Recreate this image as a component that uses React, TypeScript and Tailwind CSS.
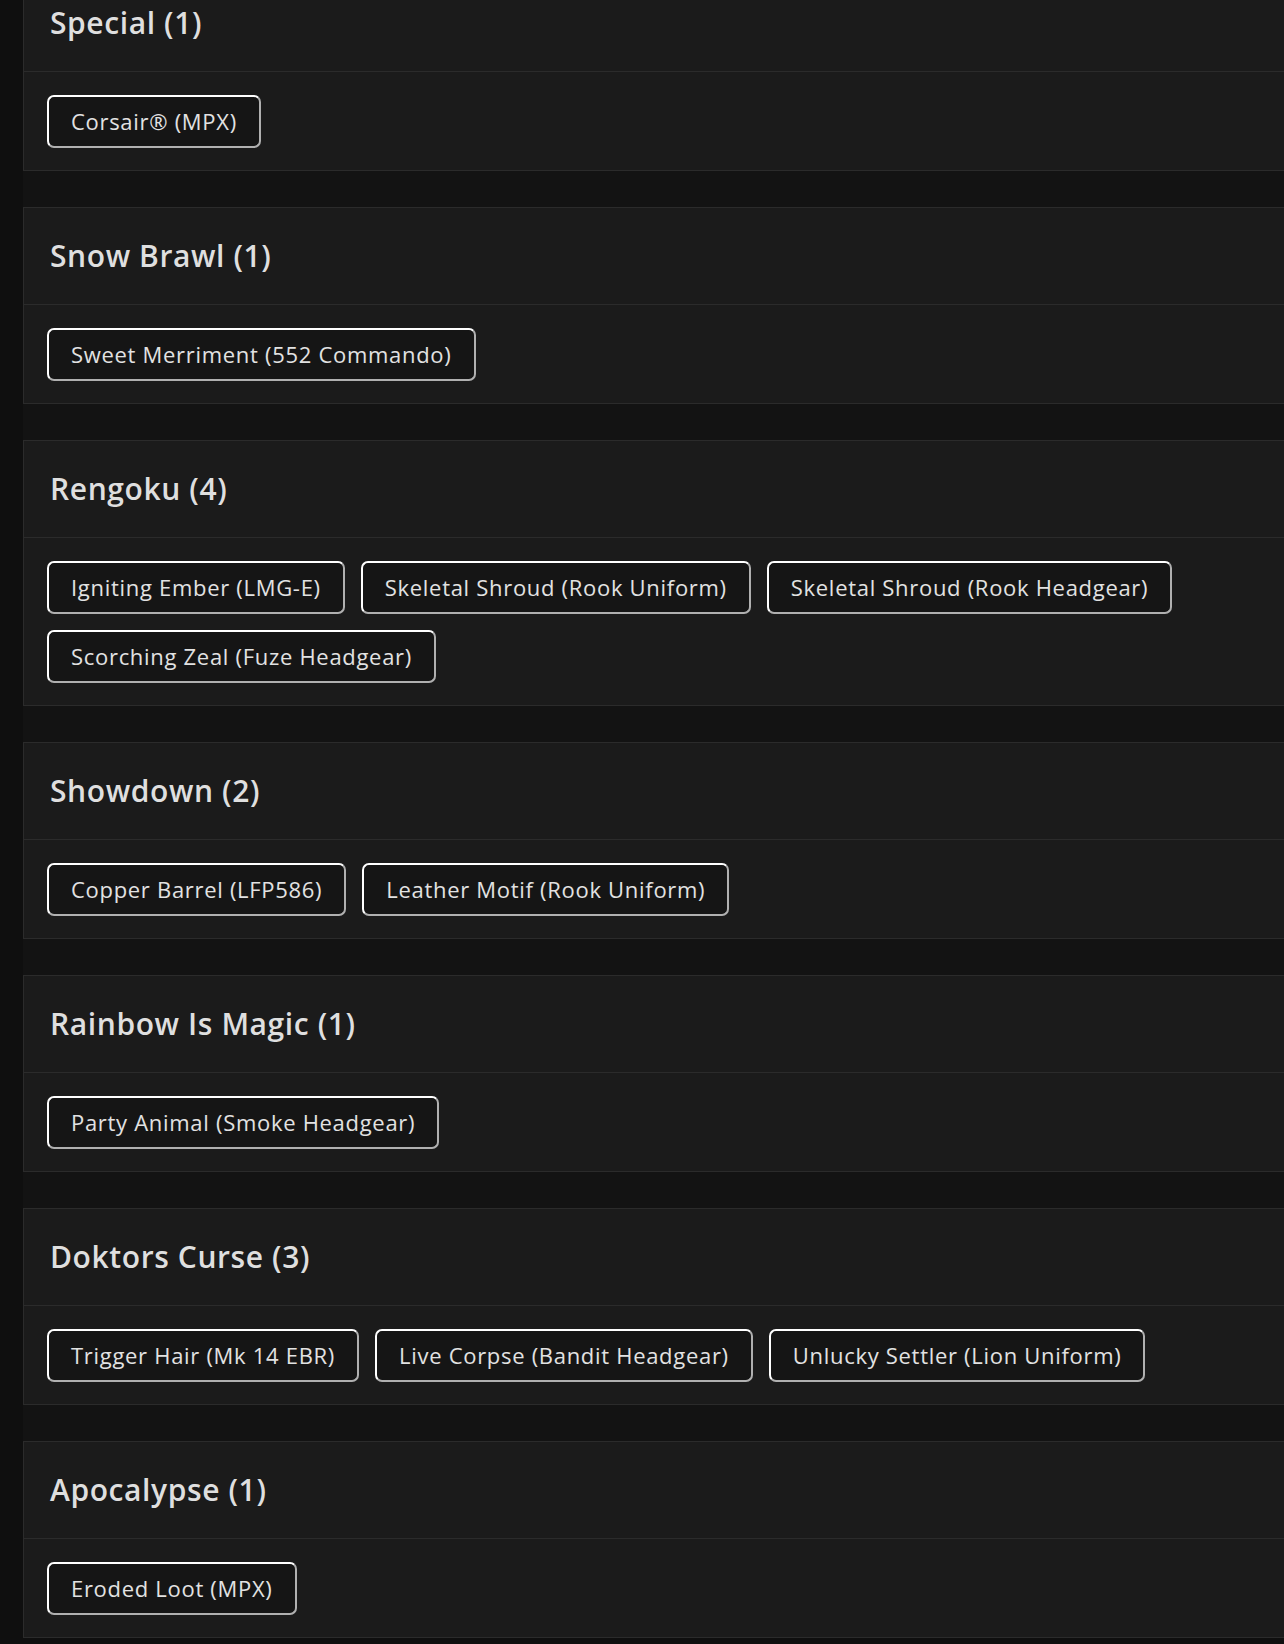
const EVENTS: { title: string; items: string[] }[] = [
  { title: "Special", items: ["Corsair® (MPX)"] },
  { title: "Snow Brawl", items: ["Sweet Merriment (552 Commando)"] },
  {
    title: "Rengoku",
    items: [
      "Igniting Ember (LMG-E)",
      "Skeletal Shroud (Rook Uniform)",
      "Skeletal Shroud (Rook Headgear)",
      "Scorching Zeal (Fuze Headgear)",
    ],
  },
  { title: "Showdown", items: ["Copper Barrel (LFP586)", "Leather Motif (Rook Uniform)"] },
  { title: "Rainbow Is Magic", items: ["Party Animal (Smoke Headgear)"] },
  {
    title: "Doktors Curse",
    items: [
      "Trigger Hair (Mk 14 EBR)",
      "Live Corpse (Bandit Headgear)",
      "Unlucky Settler (Lion Uniform)",
    ],
  },
  { title: "Apocalypse", items: ["Eroded Loot (MPX)"] },
];

export default function App() {
  return (
    <div
      className="w-[1284px] h-[1644px] overflow-hidden bg-[#0f0f0f] text-[#e4e4e4]"
      style={{ fontFamily: '"Open Sans", "Noto Sans", sans-serif' }}
    >
      <div className="ml-[23px] w-[1300px] bg-[#131313] -mt-[26px] flex flex-col gap-[36px]">
        {EVENTS.map((ev) => (
          <EventCard key={ev.title} title={ev.title} items={ev.items} />
        ))}
      </div>
    </div>
  );
}

function EventCard({ title, items }: { title: string; items: string[] }) {
  return (
    <section className="bg-[#1b1b1b] border border-[#2b2b2b]">
      <div className="h-[97px] flex items-center pl-[26px] border-b border-[#2b2b2b]">
        <h2 className="text-[30px] font-semibold leading-none tracking-[0.6px] text-[#dfdfdf]">
          {title} ({items.length})
        </h2>
      </div>
      <div className="px-[23px] pt-[23px] pb-[22px] flex flex-wrap gap-x-4 gap-y-4">
        {items.map((it) => (
          <SkinChip key={it} label={it} />
        ))}
      </div>
    </section>
  );
}

function SkinChip({ label }: { label: string }) {
  return (
    <button className="h-[53px] px-[22px] flex items-center rounded-[7px] border-2 border-t-white border-l-white border-r-[#b0b0b0] border-b-[#b0b0b0] bg-[#151515] text-[22px] tracking-[0.7px] text-[#e2e2e2] whitespace-nowrap">
      {label}
    </button>
  );
}
